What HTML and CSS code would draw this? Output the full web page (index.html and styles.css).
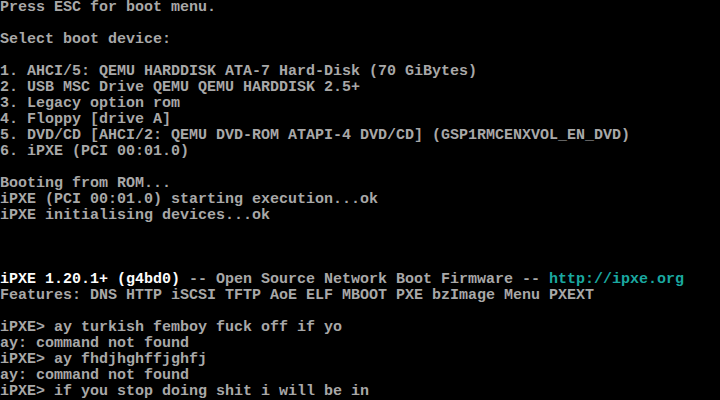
FILE: index.html
```html
<!DOCTYPE html>
<html>
<head>
<meta charset="utf-8">
<link rel="stylesheet" href="styles.css">
</head>
<body>
<pre class="screen">Press ESC for boot menu.

Select boot device:

1. AHCI/5: QEMU HARDDISK ATA-7 Hard-Disk (70 GiBytes)
2. USB MSC Drive QEMU QEMU HARDDISK 2.5+
3. Legacy option rom
4. Floppy [drive A]
5. DVD/CD [AHCI/2: QEMU DVD-ROM ATAPI-4 DVD/CD] (GSP1RMCENXVOL_EN_DVD)
6. iPXE (PCI 00:01.0)

Booting from ROM...
iPXE (PCI 00:01.0) starting execution...ok
iPXE initialising devices...ok



<span class="bright">iPXE 1.20.1+ (g4bd0)</span> -- Open Source Network Boot Firmware -- <span class="cyan">http://ipxe.org</span>
Features: DNS HTTP iSCSI TFTP AoE ELF MBOOT PXE bzImage Menu PXEXT

iPXE&gt; ay turkish femboy fuck off if yo
ay: command not found
iPXE&gt; ay fhdjhghffjghfj
ay: command not found
iPXE&gt; if you stop doing shit i will be in</pre>
</body>
</html>
```
FILE: styles.css
```css
html, body {
  margin: 0;
  padding: 0;
  background: #000;
  width: 720px;
  height: 400px;
  overflow: hidden;
}
.screen {
  margin: 0;
  font-family: "Liberation Mono", "DejaVu Sans Mono", monospace;
  font-size: 15px;
  font-weight: bold;
  line-height: 16px;
  color: #a8a8a8;
  white-space: pre;
}
.bright {
  color: #fcfcfc;
}
.cyan {
  color: #1aa8a0;
}
```
